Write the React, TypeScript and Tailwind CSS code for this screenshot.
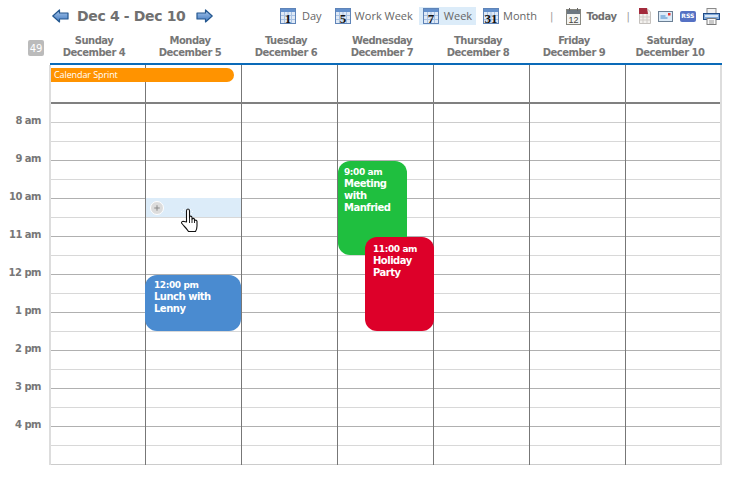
import { Plus } from "lucide-react";

const days = [
  ["Sunday", "December 4"],
  ["Monday", "December 5"],
  ["Tuesday", "December 6"],
  ["Wednesday", "December 7"],
  ["Thursday", "December 8"],
  ["Friday", "December 9"],
  ["Saturday", "December 10"],
];

const hours = ["8 am", "9 am", "10 am", "11 am", "12 pm", "1 pm", "2 pm", "3 pm", "4 pm"];

// 19 half hour slots, the even ones close on an hour line
const slots = Array.from({ length: 19 }, (_, i) => i);

function Arrow({ flip }: { flip?: boolean }) {
  return (
    <svg width="17" height="14" viewBox="0 0 17 14" className={`shrink-0 ${flip ? "-scale-x-100" : ""}`}>
      <defs>
        <linearGradient id="arrowFill" x1="0" y1="0" x2="0" y2="1">
          <stop offset="0" stopColor="#a9c8ec" />
          <stop offset="1" stopColor="#3f78c0" />
        </linearGradient>
      </defs>
      <path
        d="M0.8 7 L7.5 1 V4 H16 V10 H7.5 V13 Z"
        fill="url(#arrowFill)"
        stroke="#24578f"
        strokeWidth="1.2"
        strokeLinejoin="round"
      />
    </svg>
  );
}

function CalIcon({ n }: { n: string }) {
  return (
    <svg width="16" height="16" viewBox="0 0 16 16" className="shrink-0">
      <rect x="0.5" y="0.5" width="15" height="15" fill="#dfe9f6" stroke="#5f84b8" />
      <rect x="1" y="1" width="14" height="3" fill="#6390cc" />
      <path d="M1 7.5h14M1 11.5h14M4.5 4v11M8 4v11M11.5 4v11" stroke="#a9c2e2" strokeWidth="1" />
      <text
        x="8"
        y="14.5"
        textAnchor="middle"
        fontSize="13"
        fontWeight="700"
        fontFamily="Liberation Serif, serif"
        fill="#111"
      >
        {n}
      </text>
    </svg>
  );
}

function TodayIcon() {
  return (
    <svg width="15" height="17" viewBox="0 0 15 17" className="shrink-0">
      <rect x="0.5" y="1.5" width="14" height="15" fill="#f4f4f2" stroke="#85857d" />
      <rect x="1" y="2" width="13" height="4" fill="#6d7781" />
      <path d="M3.5 0v3M11.5 0v3" stroke="#666" />
      <text x="7.5" y="14.5" textAnchor="middle" fontSize="9" fontFamily="Liberation Sans, sans-serif" fill="#444">
        12
      </text>
    </svg>
  );
}

function SheetIcon() {
  return (
    <svg width="12" height="16" viewBox="0 0 12 16" className="shrink-0">
      <path d="M0.5 0.5H8L11.5 4V15.5H0.5Z" fill="#f3f1ee" stroke="#c4c0bc" />
      <path d="M0 0H8L9 6H0Z" fill="#a32a3c" />
      <path d="M4 6v9M8 6v9M1 9h10M1 12h10" stroke="#cfcbc8" />
    </svg>
  );
}

function MailIcon() {
  return (
    <svg width="15" height="11" viewBox="0 0 15 11" className="shrink-0">
      <rect x="0.5" y="0.5" width="14" height="10" fill="#dcebf8" stroke="#6b7f94" />
      <rect x="10" y="2" width="2.5" height="2.5" fill="#e5322d" />
      <path d="M2.5 5h5M2.5 7h7" stroke="#3f86c8" />
    </svg>
  );
}

function PrinterIcon() {
  return (
    <svg width="17" height="17" viewBox="0 0 17 17" className="shrink-0">
      <rect x="4" y="0.5" width="9" height="5" fill="#f2f2f2" stroke="#8a8a8a" />
      <rect x="0.5" y="5.5" width="16" height="6" fill="#7fa8d8" stroke="#1f4a86" />
      <rect x="2" y="7" width="13" height="2" fill="#d7e6f6" />
      <rect x="4" y="10.5" width="9" height="6" fill="#fafafa" stroke="#7b7b7b" />
      <path d="M6 13h5M6 15h5" stroke="#999" />
    </svg>
  );
}

function HandCursor() {
  return (
    <svg width="19" height="25" viewBox="0 0 19 25">
      <g fill="#ffffff" opacity="0.8">
        <rect x="3" y="1" width="1" height="1" />
        <rect x="3" y="4" width="1" height="1" />
        <rect x="1" y="3" width="1" height="1" />
        <rect x="10" y="1" width="1" height="1" />
        <rect x="12" y="3" width="1" height="1" />
        <rect x="11" y="5" width="1" height="1" />
      </g>
      <path
        d="M6.5 14 V3 Q6.5 1 8 1 Q9.5 1 9.5 3 V10 V8.5 Q11.5 7.5 12 9.5 V11 Q14 9.5 14.5 11.5 V12.5 Q16.5 11.5 17 13.5 V18 Q17 21 15.5 23.5 H8.5 Q7 21 4 18 L1.5 15 Q1.5 13 4 13.5 Z"
        fill="#fff"
        stroke="#111"
        strokeWidth="1.1"
        strokeLinejoin="round"
      />
      <path d="M9.5 10v5M12 11v4M14.5 12.5V15" stroke="#111" strokeWidth="0.9" />
    </svg>
  );
}

function ViewLink({ n, label, active, gap }: { n: string; label: string; active?: boolean; gap: string }) {
  return (
    <div className={`flex h-[18px] shrink-0 items-center px-1 ${gap} ${active ? "bg-[#dcecf9]" : ""}`}>
      <CalIcon n={n} />
      <span className="whitespace-nowrap font-['Open_Sans',sans-serif] text-[11px] text-[#666]">{label}</span>
    </div>
  );
}

function EventCard({
  time,
  lines,
  className,
}: {
  time: string;
  lines: string[];
  className: string;
}) {
  return (
    <div className={`absolute z-10 rounded-[12px] text-white ${className}`}>
      <div className="text-[9px] font-bold leading-[12px] tracking-[-0.4px]">{time}</div>
      {lines.map((line) => (
        <div key={line} className="text-[10px] font-bold leading-[12px] tracking-[-0.5px]">
          {line}
        </div>
      ))}
    </div>
  );
}

export default function App() {
  return (
    <div className="h-[483px] w-[742px] overflow-hidden bg-white font-['DejaVu_Sans',sans-serif]">
      <div className="flex h-[32px] items-center">
        <div className="ml-[52px] flex w-[224px] shrink-0 items-center">
          <Arrow />
          <span className="ml-[8px] w-[119px] shrink-0 whitespace-nowrap text-[14px] font-bold tracking-[-0.35px] text-[#707070]">
            Dec 4 - Dec 10
          </span>
          <Arrow flip />
        </div>
        <ViewLink n="1" label="Day" gap="gap-[6px]" />
        <div className="ml-[5px]">
          <ViewLink n="5" label="Work Week" gap="gap-[4px]" />
        </div>
        <div className="ml-[2px]">
          <ViewLink n="7" label="Week" active gap="gap-[5px]" />
        </div>
        <div className="ml-[3px]">
          <ViewLink n="31" label="Month" gap="gap-[4px]" />
        </div>
        <span className="ml-[9px] text-[10px] text-[#999]">|</span>
        <div className="ml-[13px] flex shrink-0 items-center gap-[5px]">
          <TodayIcon />
          <span className="text-[10px] font-bold tracking-[-0.5px] text-[#707070]">Today</span>
        </div>
        <span className="ml-[10px] text-[10px] text-[#999]">|</span>
        <div className="ml-[9px] flex shrink-0 items-center gap-[7px]">
          <SheetIcon />
          <MailIcon />
          <span className="flex h-[11px] w-[16px] items-center justify-center rounded-[2px] bg-[#5571c4] text-[6px] font-bold leading-none text-white">
            RSS
          </span>
          <PrinterIcon />
        </div>
      </div>

      <div className="flex h-[31px]">
        <div className="ml-[28px] mt-2 flex h-4 w-4 shrink-0 items-center justify-center rounded-[2px] bg-[#bbbbbb] text-[10px] text-white">
          49
        </div>
        <div className="ml-[2px] grid grid-cols-[repeat(7,96px)]">
          {days.map(([day, date]) => (
            <div
              key={day}
              className="pt-[3px] text-center text-[10px] font-bold leading-[12px] tracking-[-0.5px] text-[#777777]"
            >
              <div>{day}</div>
              <div>{date}</div>
            </div>
          ))}
        </div>
      </div>

      <div className="ml-[50px] h-[2px] w-[672px] bg-[#0a6ab8]" />

      <div className="ml-[49px] w-[673px] border-x-2 border-[#dddddd]">
        <div className="relative grid h-[39px] grid-cols-[95px_repeat(5,96px)_94px] border-b-2 border-[#808080]">
          {days.map(([day], i) => (
            <div key={day} className={i < 6 ? "border-r border-[#777777]" : ""} />
          ))}
          <div className="absolute left-0 top-[3px] h-[14px] w-[183px] rounded-r-[7px] bg-[#ff9300] pl-[3px] font-['Open_Sans',sans-serif] text-[9px] leading-[14px] tracking-[-0.1px] text-white">
            Calendar Sprint
          </div>
        </div>
      </div>

      <div className="flex">
        <div className="w-[49px] shrink-0">
          {hours.map((h) => (
            <div
              key={h}
              className="h-[38px] pr-[8px] pt-[11px] text-right text-[10px] font-bold leading-[12px] tracking-[-0.5px] text-[#777777]"
            >
              {h}
            </div>
          ))}
        </div>
        <div className="grid w-[673px] grid-cols-[95px_repeat(5,96px)_94px] border-x-2 border-[#dddddd]">
          {days.map(([day], d) => (
            <div key={day} className={`relative ${d < 6 ? "border-r border-[#777777]" : ""}`}>
              {slots.map((s) => (
                <div
                  key={s}
                  className={`h-[19px] border-b ${
                    s === 0 || s === 18 ? "border-[#cccccc]" : s % 2 === 0 ? "border-[#b0b0b0]" : "border-[#d8d8d8]"
                  }`}
                />
              ))}

              {d === 1 && (
                <>
                  <div className="absolute left-0 right-0 top-[94px] z-10 flex h-[19px] items-center bg-[#dcecf9] pl-[4px]">
                    <span className="flex h-[14px] w-[14px] items-center justify-center rounded-full border border-white bg-[#dcdcdc]">
                      <Plus size={8} strokeWidth={3} className="text-[#888]" />
                    </span>
                  </div>
                  <div className="absolute left-[34px] top-[104px] z-20">
                    <HandCursor />
                  </div>
                  <EventCard
                    time="12:00 pm"
                    lines={["Lunch with", "Lenny"]}
                    className="-left-px right-0 top-[171px] h-[56px] bg-[#4a8bd0] pl-[9px] pt-[4px]"
                  />
                </>
              )}
              {d === 3 && (
                <>
                  <EventCard
                    time="9:00 am"
                    lines={["Meeting", "with", "Manfried"]}
                    className="left-0 top-[57px] h-[94px] w-[69px] bg-[#1fbf3f] pl-[6px] pt-[5px]"
                  />
                  <EventCard
                    time="11:00 am"
                    lines={["Holiday", "Party"]}
                    className="left-[27px] top-[133px] h-[94px] w-[69px] bg-[#dd0029] pl-[8px] pt-[6px]"
                  />
                </>
              )}
            </div>
          ))}
        </div>
      </div>
    </div>
  );
}
